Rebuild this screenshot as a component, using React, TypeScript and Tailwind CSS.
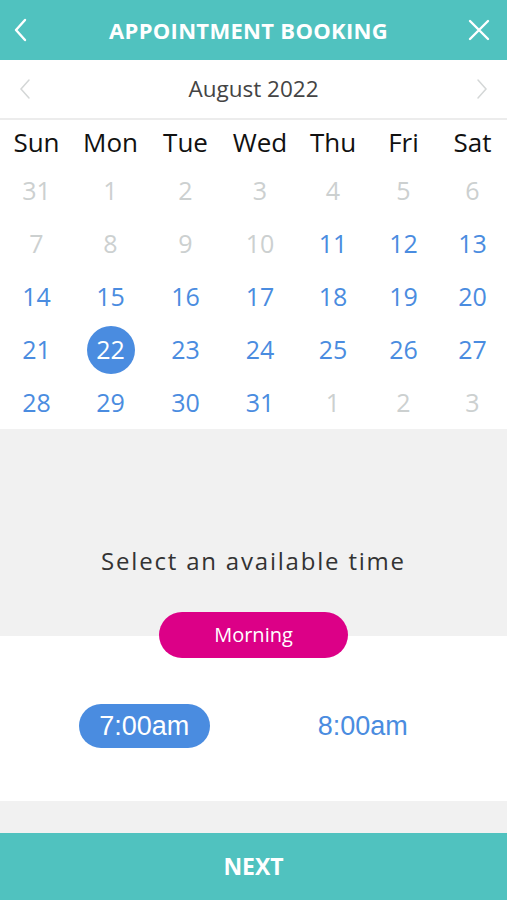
import React from 'react'

const weekdays = ['Sun', 'Mon', 'Tue', 'Wed', 'Thu', 'Fri', 'Sat']

type Day = { n: number; muted?: boolean; selected?: boolean }

const weeks: Day[][] = [
  [31, 1, 2, 3, 4, 5, 6].map((n) => ({ n, muted: true })),
  [
    { n: 7, muted: true },
    { n: 8, muted: true },
    { n: 9, muted: true },
    { n: 10, muted: true },
    { n: 11 },
    { n: 12 },
    { n: 13 },
  ],
  [14, 15, 16, 17, 18, 19, 20].map((n) => ({ n })),
  [21, 22, 23, 24, 25, 26, 27].map((n) => ({ n, selected: n === 22 })),
  [
    { n: 28 },
    { n: 29 },
    { n: 30 },
    { n: 31 },
    { n: 1, muted: true },
    { n: 2, muted: true },
    { n: 3, muted: true },
  ],
]

const cols = 'grid grid-cols-[73px_75px_75px_74px_72px_69px_69px]'

export default function App() {
  return (
    <div
      className="w-[507px] h-[900px] flex flex-col bg-white overflow-hidden"
      style={{ fontFamily: '"Open Sans", "Noto Sans", sans-serif' }}
    >
      {/* header */}
      <div className="h-[60px] bg-[#50c2bf] flex items-center justify-between px-[12px] shrink-0">
        <svg className="w-[18px] h-[26px]" viewBox="0 0 18 26" fill="none" stroke="white" strokeWidth={2.4} strokeLinecap="round" strokeLinejoin="round">
          <path d="M13 3L4 13l9 10" />
        </svg>
        <h1 className="text-white font-bold text-[22px] tracking-[0.3px]">APPOINTMENT BOOKING</h1>
        <svg className="w-[24px] h-[24px] mr-[4px]" viewBox="0 0 24 24" fill="none" stroke="white" strokeWidth={2.4} strokeLinecap="round">
          <path d="M3 3l18 18M21 3L3 21" />
        </svg>
      </div>

      {/* month bar */}
      <div className="h-[60px] flex items-center justify-between px-[18px] border-b-2 border-[#ececec] shrink-0">
        <svg className="w-[14px] h-[22px]" viewBox="0 0 14 22" fill="none" stroke="#d4d7d7" strokeWidth={1.5} strokeLinecap="round">
          <path d="M11 2L3 11l8 9" />
        </svg>
        <span className="text-[22.5px] text-[#444]">August 2022</span>
        <svg className="w-[14px] h-[22px]" viewBox="0 0 14 22" fill="none" stroke="#d4d7d7" strokeWidth={1.5} strokeLinecap="round">
          <path d="M3 2l8 9-8 9" />
        </svg>
      </div>

      {/* calendar */}
      <div className="shrink-0">
        <div className={`${cols} h-[44px] items-center`}>
          {weekdays.map((d) => (
            <div key={d} className="text-center text-[26px] leading-[32px] text-[#111]">
              {d}
            </div>
          ))}
        </div>
        {weeks.map((w, i) => (
          <div key={i} className={`${cols} h-[53px] items-center`}>
            {w.map((d, j) => (
              <div key={j} className="flex justify-center">
                {d.selected ? (
                  <span className="w-[48px] h-[48px] rounded-full bg-[#4a8ce0] text-white text-[25px] flex items-center justify-center">
                    {d.n}
                  </span>
                ) : (
                  <span className={`text-[25px] ${d.muted ? 'text-[#ccd0d0]' : 'text-[#4a8ce0]'}`}>{d.n}</span>
                )}
              </div>
            ))}
          </div>
        ))}
      </div>

      {/* time header */}
      <div className="h-[207px] bg-[#f1f1f1] flex flex-col items-center justify-end shrink-0">
        <p className="text-[24px] text-[#333] tracking-[1.8px] leading-[32px]">Select an available time</p>
        <button className="relative z-10 mt-[35px] -mb-[22px] w-[189px] h-[46px] rounded-full bg-[#dc0087] text-white text-[20px]">
          Morning
        </button>
      </div>

      {/* slots */}
      <div className="h-[165px] bg-white pt-[68px] px-[35px] grid grid-cols-2 content-start shrink-0">
        <div className="flex justify-center">
          <span
            className="w-[131px] h-[44px] rounded-full bg-[#4a8ce0] text-white text-[27px] flex items-center justify-center"
            style={{ fontFamily: '"Liberation Sans", Arial, sans-serif' }}
          >
            7:00am
          </span>
        </div>
        <div className="flex justify-center">
          <span
            className="h-[44px] text-[#4a8ce0] text-[27px] flex items-center"
            style={{ fontFamily: '"Liberation Sans", Arial, sans-serif' }}
          >
            8:00am
          </span>
        </div>
      </div>

      <div className="h-[32px] bg-[#f1f1f1] shrink-0" />

      {/* footer */}
      <div className="flex-1 bg-[#50c2bf] flex items-center justify-center">
        <span className="text-white font-bold text-[23px]">NEXT</span>
      </div>
    </div>
  )
}
